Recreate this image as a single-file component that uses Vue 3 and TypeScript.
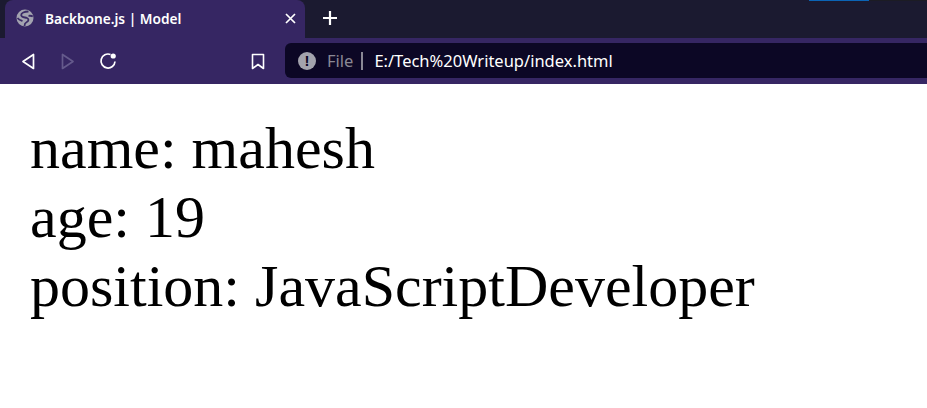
<script setup lang="ts">
const lines: string[] = ['name: mahesh', 'age: 19', 'position: JavaScriptDeveloper']
</script>

<template>
  <div class="window">
    <div class="strip">
      <div class="tab">
        <svg class="globe" width="18" height="18" viewBox="0 0 18 18">
          <circle cx="9" cy="9" r="8.5" fill="#a3a3b0" />
          <path d="M12.5 2.5 C8.5 2.5 5 3.8 5.2 6.2 C5.4 8.6 9 8.2 11 9 C13 9.8 13 12 10.5 13.2 C9 13.9 8.5 15 8.5 17 M1.5 9 C3 11 5 11.5 6.5 12 M12.5 6.8 C14 6.8 15.5 6.4 16.8 7.5" fill="none" stroke="#3a2a66" stroke-width="1.8" />
        </svg>
        <span class="title">Backbone.js | Model</span>
        <svg class="close" width="11" height="11" viewBox="0 0 11 11">
          <path d="M1 1 L10 10 M10 1 L1 10" stroke="#fff" stroke-width="1.7" />
        </svg>
      </div>
      <svg class="plus" width="16" height="16" viewBox="0 0 16 16">
        <path d="M8 1 V15 M1 8 H15" stroke="#fff" stroke-width="2.2" />
      </svg>
      <div class="progress"></div>
      <div class="progress-rest"></div>
    </div>
    <div class="toolbar">
      <div class="nav">
        <span class="btn">
          <svg width="14" height="17" viewBox="0 0 14 17">
            <path d="M12.5 1.5 V15.5 L2 8.5 Z" fill="none" stroke="#fff" stroke-width="1.7" stroke-linejoin="round" />
          </svg>
        </span>
        <span class="btn">
          <svg width="14" height="17" viewBox="0 0 14 17">
            <path d="M1.5 1.5 V15.5 L12 8.5 Z" fill="none" stroke="#655a8c" stroke-width="1.7" stroke-linejoin="round" />
          </svg>
        </span>
        <span class="btn">
          <svg width="18" height="18" viewBox="0 0 18 18">
            <path d="M16 9.5 A7 7 0 1 1 11.5 2.5" fill="none" stroke="#fff" stroke-width="1.7" />
            <circle cx="14.2" cy="4" r="2.6" fill="#fff" />
          </svg>
        </span>
      </div>
      <svg class="bookmark" width="14" height="17" viewBox="0 0 14 17">
        <path d="M1.5 1.5 H12.5 V15.5 L7 11.5 L1.5 15.5 Z" fill="none" stroke="#fff" stroke-width="1.6" stroke-linejoin="round" />
      </svg>
      <div class="omnibox">
        <span class="info">!</span>
        <span class="scheme">File</span>
        <span class="sep"></span>
        <span class="url">E:/Tech%20Writeup/index.html</span>
      </div>
    </div>
    <div class="content">
      <div v-for="line in lines" :key="line">{{ line }}</div>
    </div>
  </div>
</template>

<style>
html, body { margin: 0; background: #fff; overflow: hidden; }
</style>

<style scoped>
.window { width: 927px; height: 408px; display: flex; flex-direction: column; overflow: hidden; }
.strip { height: 38px; background: #1b1a30; display: flex; align-items: center; position: relative; }
.tab { width: 300px; height: 38px; margin-left: 5px; background: #362663; border-radius: 8px 8px 0 0; display: flex; align-items: center; box-sizing: border-box; padding: 0 6px 2px 11px; }
.globe { flex: none; }
.title { flex: 1; margin-left: 11px; color: #fff; font: 600 13.7px "Noto Sans", "Open Sans", sans-serif; }
.close { flex: none; margin-right: 3px; }
.plus { margin-left: 17px; margin-bottom: 2px; }
.progress { position: absolute; left: 809px; top: 0; width: 60px; height: 1px; background: #0b64b5; }
.progress-rest { position: absolute; left: 869px; top: 0; width: 58px; height: 1px; background: #1c1c24; }
.toolbar { height: 46px; background: #362663; display: flex; align-items: center; padding-left: 8px; }
.nav { display: flex; align-items: center; }
.btn { width: 40px; display: flex; justify-content: center; }
.bookmark { margin-left: 123px; }
.omnibox { flex: 1; height: 35px; margin-left: 20px; margin-bottom: 1px; background: #0c0725; border-radius: 6px 0 0 6px; display: flex; align-items: center; padding-left: 13px; }
.info { width: 18px; height: 18px; border-radius: 50%; background: #a3a3ad; color: #0c0725; font: 700 15px/18px "Liberation Sans", sans-serif; text-align: center; }
.scheme { margin-left: 11px; color: #8a8894; font: 16.5px "Noto Sans", sans-serif; }
.sep { width: 2px; height: 18px; background: #8a8894; margin: 0 11px 0 8px; }
.url { color: #fff; font: 16.5px "Noto Sans", sans-serif; }
.content { padding: 30px 0 0 30px; color: #000; font: 60px/69px "Liberation Serif", serif; }
</style>
